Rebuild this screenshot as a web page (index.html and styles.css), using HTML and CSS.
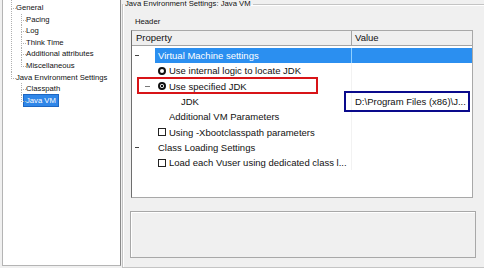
FILE: index.html
```html
<!DOCTYPE html>
<html lang="en">
<head>
    <meta charset="UTF-8">
    <title>Java Environment Settings: Java VM</title>
    <link rel="stylesheet" href="styles.css">
</head>
<body>
    <div class="tree">
        <ul class="root">
            <li><span class="name">General</span>
                <ul>
                    <li><span class="name">Pacing</span></li>
                    <li><span class="name">Log</span></li>
                    <li><span class="name">Think Time</span></li>
                    <li><span class="name">Additional attributes</span></li>
                    <li><span class="name">Miscellaneous</span></li>
                </ul>
            </li>
            <li><span class="name">Java Environment Settings</span>
                <ul>
                    <li><span class="name">Classpath</span></li>
                    <li><span class="name selected">Java VM</span></li>
                </ul>
            </li>
        </ul>
    </div>

    <fieldset class="group">
        <legend>Java Environment Settings: Java VM</legend>
        <div class="caption">Header</div>

        <div class="grid">
            <div class="head">
                <div class="hc">Property</div>
                <div class="hc value-head">Value</div>
            </div>
            <div class="rows">
                <div class="row selected">
                    <span class="exp"><i></i></span>
                    <span class="lbl top">Virtual Machine settings</span>
                    <span class="val"></span>
                </div>
                <div class="row">
                    <span class="ico"><b class="radio"></b></span>
                    <span class="lbl">Use internal logic to locate JDK</span>
                    <span class="val"></span>
                </div>
                <div class="row">
                    <span class="exp sub"><i></i></span>
                    <span class="ico"><b class="radio on"></b></span>
                    <span class="lbl">Use specified JDK</span>
                    <span class="val"></span>
                </div>
                <div class="row">
                    <span class="lbl deep">JDK</span>
                    <span class="val">D:\Program Files (x86)\J...</span>
                </div>
                <div class="row">
                    <span class="lbl">Additional VM Parameters</span>
                    <span class="val"></span>
                </div>
                <div class="row">
                    <span class="ico"><b class="check"></b></span>
                    <span class="lbl">Using -Xbootclasspath parameters</span>
                    <span class="val"></span>
                </div>
                <div class="row">
                    <span class="exp"><i></i></span>
                    <span class="lbl top">Class Loading Settings</span>
                    <span class="val"></span>
                </div>
                <div class="row">
                    <span class="ico"><b class="check"></b></span>
                    <span class="lbl">Load each Vuser using dedicated class l...</span>
                    <span class="val"></span>
                </div>
            </div>
            <div class="mark red"></div>
            <div class="mark blue"></div>
        </div>

        <div class="desc"></div>
    </fieldset>
</body>
</html>
```

FILE: styles.css
```css
body {
    margin: 0;
    height: 268px;
    overflow: hidden;
    display: flex;
    background: #f0f0f0;
    color: #111;
    font-family: "Liberation Sans", Arial, sans-serif;
}

/* left tree */
.tree {
    box-sizing: border-box;
    width: 119px;
    height: 266px;
    margin-left: 2px;
    padding-top: 2px;
    background: #fff;
    border-left: 1px solid #b4b4b4;
    border-right: 1px solid #8a8a8a;
    border-bottom: 1px solid #b4b4b4;
    font-size: 7.7px;
}
.tree ul {
    list-style: none;
    margin: 0;
    padding: 0 0 0 5px;
}
.tree .root {
    padding-left: 8px;
}
.tree li {
    position: relative;
    padding-left: 5px;
    line-height: 11.6px;
    white-space: nowrap;
}
.tree li::before {
    content: '';
    position: absolute;
    left: 0;
    top: 0;
    width: 4px;
    height: 6px;
    border-left: 1px dotted #b0b0b0;
    border-bottom: 1px dotted #b0b0b0;
}
.tree li:not(:last-child)::after {
    content: '';
    position: absolute;
    left: 0;
    top: 6px;
    bottom: 0;
    border-left: 1px dotted #b0b0b0;
}
.tree .root > li:first-child::before {
    top: -2px;
    height: 8px;
}
.tree .selected {
    margin-left: -2px;
    padding: 1px 2px;
    background: #2f86e8;
    outline: 1px solid #1d66c2;
    color: #fff;
}

/* right group box */
.group {
    flex: 1;
    min-width: 0;
    margin: 0 0 0 1px;
    padding: 0;
    border: 1px solid #c4c4c4;
    border-right: none;
    box-shadow: inset 1px 1px #fff;
}
.group legend {
    margin: 0;
    padding: 0 2px;
    font-size: 7.7px;
    line-height: 8px;
}
.caption {
    margin: 8px 0 3px 12px;
    font-size: 7.7px;
    line-height: 11px;
}

.grid {
    position: relative;
    box-sizing: border-box;
    width: 342px;
    height: 168px;
    margin-left: 8px;
    background: #fff;
    border: 1px solid #a8a8a8;
    border-left-color: #6e6e6e;
    font-size: 9.5px;
}
.head {
    display: grid;
    grid-template-columns: 219px 1fr;
    box-sizing: border-box;
    height: 15px;
    background: #efefef;
    border-bottom: 1px solid #a4a4a4;
}
.hc {
    padding-left: 4px;
    line-height: 14px;
}
.value-head {
    padding-left: 3px;
    border-left: 1px solid #a4a4a4;
}
.rows {
    padding-top: 2px;
}
.row {
    display: grid;
    grid-template-columns: 23px 14px 182px 1fr;
    height: 15.3px;
    align-items: stretch;
    white-space: nowrap;
}
.row > span {
    display: flex;
    align-items: center;
    overflow: hidden;
}
.exp {
    grid-column: 1;
    padding-left: 3px;
}
.exp i {
    width: 4px;
    height: 1px;
    background: #444;
}
.exp.sub {
    padding-left: 13px;
}
.exp.sub i {
    width: 5px;
    background: #777;
}
.ico {
    grid-column: 2;
    padding-left: 3px;
}
.lbl {
    grid-column: 3;
}
.lbl.top {
    grid-column: 2 / 4;
    padding-left: 3px;
}
.lbl.deep {
    padding-left: 12px;
}
.val {
    grid-column: 4;
    padding-left: 3px;
    border-left: 1px solid #f2f2f2;
}
.row.selected .lbl,
.row.selected .val {
    background: #2b8ff0;
    color: #fff;
}
.row.selected .val {
    border-left-color: #8fd0ff;
}

.radio {
    box-sizing: border-box;
    width: 8px;
    height: 8px;
    border: 2px solid #111;
    border-radius: 50%;
}
.radio.on {
    background: radial-gradient(circle, #111 0 1.2px, #fff 1.5px);
}
.check {
    box-sizing: border-box;
    width: 8px;
    height: 8px;
    border: 1.5px solid #222;
}

/* annotation rectangles over the grid */
.mark {
    position: absolute;
    box-sizing: border-box;
}
.mark.red {
    left: 5px;
    top: 46px;
    width: 181px;
    height: 17px;
    border: 2px solid #d81418;
}
.mark.blue {
    left: 212px;
    top: 60px;
    width: 126px;
    height: 21px;
    border: 2px solid #0a0a8c;
}

.desc {
    box-sizing: border-box;
    width: 346px;
    height: 47px;
    margin: 13px 0 6px 7px;
    border: 1px solid #a8a8a8;
    box-shadow: inset 1px 1px #fff;
}
```
